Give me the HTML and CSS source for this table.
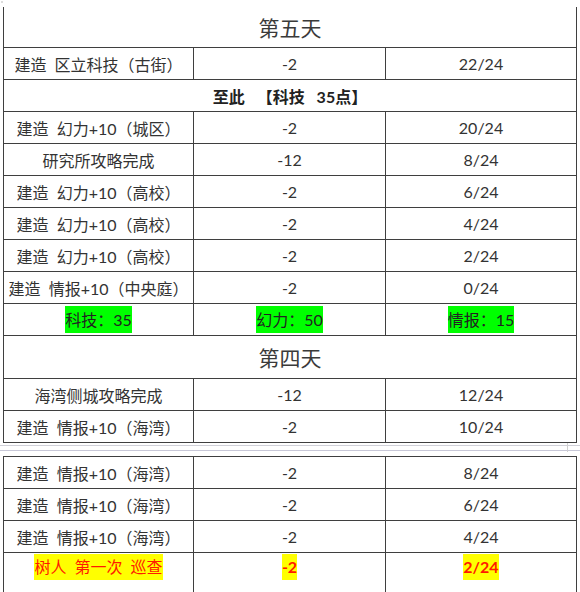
FILE: index.html
```html
<!DOCTYPE html>
<html>
<head>
<meta charset="utf-8">
<link rel="stylesheet" href="styles.css">
</head>
<body>
<div class="page">
  <div class="corner"></div>
  <table class="sheet first">
    <colgroup><col class="c1"><col class="c2"><col class="c3"></colgroup>
    <tr class="day"><td colspan="3">第五天</td></tr>
    <tr><td class="left">建造 区立科技（古街）</td><td>-2</td><td>22/24</td></tr>
    <tr class="summary"><td colspan="3">至此 【科技 35点】</td></tr>
    <tr><td>建造 幻力+10（城区）</td><td>-2</td><td>20/24</td></tr>
    <tr><td>研究所攻略完成</td><td>-12</td><td>8/24</td></tr>
    <tr><td>建造 幻力+10（高校）</td><td>-2</td><td>6/24</td></tr>
    <tr><td>建造 幻力+10（高校）</td><td>-2</td><td>4/24</td></tr>
    <tr><td>建造 幻力+10（高校）</td><td>-2</td><td>2/24</td></tr>
    <tr><td>建造 情报+10（中央庭）</td><td>-2</td><td>0/24</td></tr>
    <tr class="totals"><td><span class="hl-green">科技：35</span></td><td><span class="hl-green">幻力：50</span></td><td><span class="hl-green">情报：15</span></td></tr>
    <tr class="day day4"><td colspan="3">第四天</td></tr>
    <tr><td>海湾侧城攻略完成</td><td>-12</td><td>12/24</td></tr>
    <tr><td>建造 情报+10（海湾）</td><td>-2</td><td>10/24</td></tr>
  </table>
  <div class="break"><div class="break-tab"></div></div>
  <table class="sheet second">
    <colgroup><col class="c1"><col class="c2"><col class="c3"></colgroup>
    <tr><td>建造 情报+10（海湾）</td><td>-2</td><td>8/24</td></tr>
    <tr><td>建造 情报+10（海湾）</td><td>-2</td><td>6/24</td></tr>
    <tr><td>建造 情报+10（海湾）</td><td>-2</td><td>4/24</td></tr>
    <tr class="alert"><td><span class="hl-yellow">树人 第一次 巡查</span></td><td><span class="hl-yellow strong">-2</span></td><td><span class="hl-yellow strong">2/24</span></td></tr>
  </table>
</div>
</body>
</html>
```

FILE: styles.css
```css
html, body {
  margin: 0;
  padding: 0;
  background: #ffffff;
  overflow: hidden;
}
body {
  width: 580px;
  height: 592px;
  font-family: "Lato", "Noto Sans CJK SC", sans-serif;
  color: #333333;
}
.page {
  position: relative;
  padding: 7px 0 0 3px;
}
.corner {
  position: absolute;
  left: 1px;
  top: 1px;
  width: 2px;
  height: 2px;
  background: #dddddd;
}
.sheet {
  border-collapse: collapse;
  width: 573px;
  table-layout: fixed;
}
.c1 { width: 190px; }
.c2 { width: 192px; }
.c3 { width: 191px; }
.sheet td {
  border: 1px solid #3f3f3f;
  text-align: center;
  font-size: 16px;
  height: 31px;
  padding: 0;
  white-space: nowrap;
  word-spacing: 4px;
}
.sheet.first tr:first-child td {
  border-top: none;
}
.day td {
  height: 40px;
  font-size: 21px;
  font-family: "Noto Sans CJK SC", sans-serif;
  font-weight: 400;
  color: #3a3a3a;
}
.day4 td {
  height: 42px;
}
.summary td {
  font-weight: 700;
  color: #222222;
  word-spacing: 8px;
}
.left {
  padding-right: 10px;
}
.hl-green {
  display: inline-block;
  background: #00ff00;
  line-height: 27px;
  color: #222222;
}
.break {
  position: relative;
  margin-left: -3px;
  width: 580px;
  height: 4px;
  margin-top: 2px;
  margin-bottom: 5px;
  border-top: 1px solid #d0d0d8;
  border-bottom: 1px solid #c8c8d8;
}
.break-tab {
  position: absolute;
  right: 0;
  top: -3px;
  width: 12px;
  height: 9px;
  border-left: 1px solid #d0d0d0;
}
.sheet.second tr:last-child td {
  border-bottom: none;
  height: 40px;
  vertical-align: top;
  padding-top: 1px;
}
.hl-yellow {
  display: inline-block;
  background: #ffff00;
  color: #ff1a00;
  line-height: 26px;
}
.strong {
  font-weight: 700;
}
```
